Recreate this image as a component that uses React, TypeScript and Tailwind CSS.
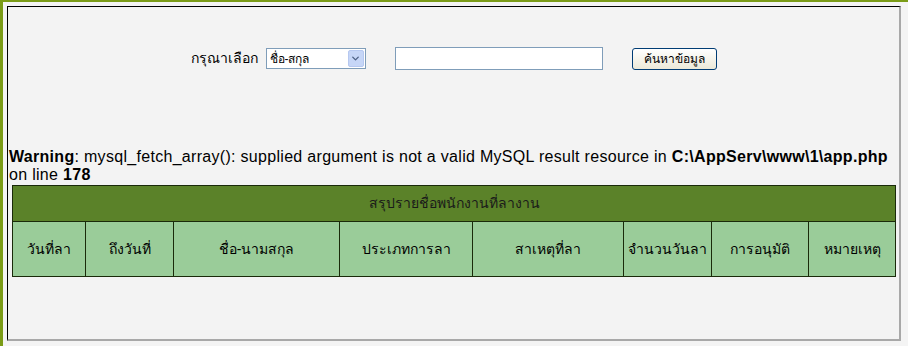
import { ChevronDown } from 'lucide-react';

const columns = [
  { label: 'วันที่ลา', w: 'w-[73px]' },
  { label: 'ถึงวันที่', w: 'w-[88px]' },
  { label: 'ชื่อ-นามสกุล', w: 'w-[166px]' },
  { label: 'ประเภทการลา', w: 'w-[133px]' },
  { label: 'สาเหตุที่ลา', w: 'w-[151px]' },
  { label: 'จำนวนวันลา', w: 'w-[88px]' },
  { label: 'การอนุมัติ', w: 'w-[97px]' },
  { label: 'หมายเหตุ', w: 'flex-1' },
];

export default function App() {
  return (
    <div className="w-[908px] h-[346px] overflow-hidden bg-[#f4f4f4] border-t-[2px] border-l-[3px] border-[#7b9c17] pl-[4px] pt-[4px] font-['Liberation_Sans',Tahoma,sans-serif] text-black">
      <div className="w-[894px] h-[335px] bg-[#f3f3f3] border-t border-l border-black border-r-2 border-b-2 border-r-[#a8a8a8] border-b-[#a8a8a8]">
        {/* Search bar */}
        <div className="flex items-center justify-center pt-[40px] h-[63px]">
          <span className="text-[14px] mr-[8px]">กรุณาเลือก</span>
          <div className="w-[100px] h-[21px] bg-white border border-[#7f9db9] flex items-center">
            <span className="flex-1 text-[12px] pl-[3px] leading-none">ชื่อ-สกุล</span>
            <div className="w-[16px] h-[17px] mr-[1px] rounded-[2px] bg-[#c6d6f7] border border-[#b6c8f0] flex items-center justify-center">
              <ChevronDown className="w-[11px] h-[11px] text-[#4d6185]" strokeWidth={3} />
            </div>
          </div>
          <div className="w-[208px] h-[23px] bg-white border border-[#7f9db9] ml-[29px]" />
          <button className="ml-[29px] w-[85px] h-[22px] rounded-[3px] border border-[#003c74] bg-gradient-to-b from-white to-[#ece9d8] text-[12px] leading-none">
            ค้นหาข้อมูล
          </button>
        </div>

        {/* Warning */}
        <div className="mt-[78px] pl-[1px] pr-[4px] text-[16px] leading-[18px] tracking-[0.3px]">
          <b>Warning</b>: mysql_fetch_array(): supplied argument is not a valid MySQL result resource in{' '}
          <b>C:\AppServ\www\1\app.php</b> on line <b>178</b>
        </div>

        {/* Table */}
        <div className="ml-[4px] mt-[1px] w-[884px] border border-[#1a2a0a]">
          <div className="h-[36px] bg-[#5b8229] flex items-center justify-center text-[14px] text-[#1a1a1a] border-b border-[#1a2a0a]">
            สรุปรายชื่อพนักงานที่ลางาน
          </div>
          <div className="flex h-[54px] bg-[#9acc99]">
            {columns.map((c, i) => (
              <div
                key={c.label}
                className={`${c.w} flex items-center justify-center text-[14px] ${i < columns.length - 1 ? 'border-r border-[#1a2a0a]' : ''}`}
              >
                {c.label}
              </div>
            ))}
          </div>
        </div>
      </div>
    </div>
  );
}
